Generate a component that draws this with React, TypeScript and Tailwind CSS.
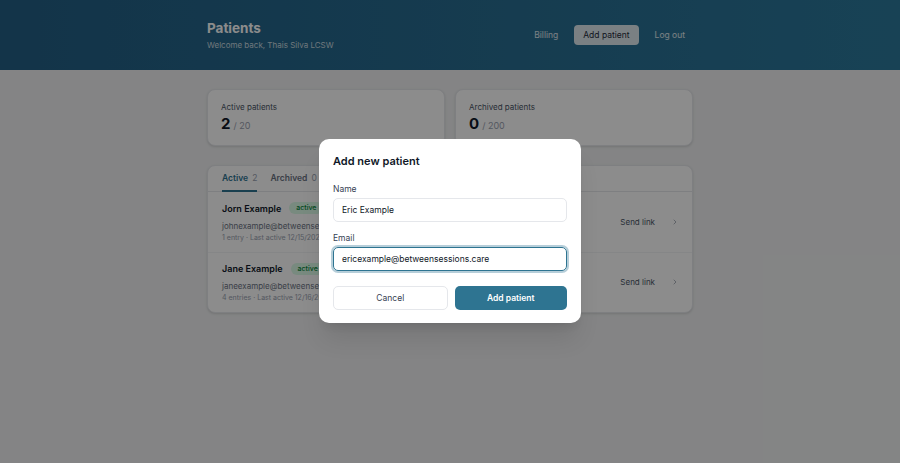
import React, { useState } from 'react';

interface Patient {
  name: string;
  email: string;
  meta: string;
}

const patients: Patient[] = [
  { name: 'Jorn Example', email: 'johnexample@betweensessions.care', meta: '1 entry · Last active 12/15/2025' },
  { name: 'Jane Example', email: 'janeexample@betweensessions.care', meta: '4 entries · Last active 12/16/2025' },
];

const font = { fontFamily: 'Inter, "Noto Sans", sans-serif' };

const StatCard: React.FC<{ label: string; value: number; limit: number }> = ({ label, value, limit }) => (
  <div className="flex-1 h-[57px] bg-white rounded-[8px] border border-gray-200 shadow-sm px-[13px] pt-[12px]">
    <div className="text-[8px] text-gray-600 leading-[10px]">{label}</div>
    <div className="mt-[3px] flex items-baseline gap-[3px]">
      <span className="text-[15px] font-bold text-gray-900 leading-[18px]">{value}</span>
      <span className="text-[9px] text-gray-400">/ {limit}</span>
    </div>
  </div>
);

const App: React.FC = () => {
  const [name, setName] = useState('Eric Example');
  const [email, setEmail] = useState('ericexample@betweensessions.care');

  return (
    <div className="relative min-h-[463px] bg-[#f0f1f2]" style={font}>
      {/* header */}
      <header className="h-[70px] bg-gradient-to-r from-[#235f85] to-[#2c799c]">
        <div className="w-[486px] mx-auto flex items-center justify-between h-full">
          <div>
            <h1 className="text-[13.5px] font-bold text-white leading-[18px]">Patients</h1>
            <p className="text-[8px] text-white/75 mt-[2px]">Welcome back, Thais Silva LCSW</p>
          </div>
          <nav className="flex items-center gap-[16px] text-[8.5px] text-white/85 pr-[8px]">
            <span>Billing</span>
            <span className="bg-white/85 text-gray-800 rounded-[4px] px-[9px] h-[20px] flex items-center">Add patient</span>
            <span>Log out</span>
          </nav>
        </div>
      </header>

      <main className="w-[486px] mx-auto pt-[19px]">
        <div className="flex gap-[10px]">
          <StatCard label="Active patients" value={2} limit={20} />
          <StatCard label="Archived patients" value={0} limit={200} />
        </div>

        <div className="mt-[19px] bg-white rounded-[8px] border border-gray-200 shadow-sm">
          <div className="flex gap-[13px] px-[14px] border-b border-gray-200 text-[8.5px] leading-[10px]">
            <div className="pt-[7px] pb-[7px] border-b-2 border-[#2e7491] -mb-px font-semibold text-[#2e7491]">
              Active <span className="font-normal text-gray-400 ml-[2px]">2</span>
            </div>
            <div className="pt-[7px] pb-[7px] font-semibold text-gray-500">
              Archived <span className="font-normal text-gray-400 ml-[2px]">0</span>
            </div>
          </div>
          {patients.map((p, i) => (
            <div key={p.email} className={`flex items-center justify-between px-[14px] h-[60px] ${i > 0 ? 'border-t border-gray-100' : ''}`}>
              <div>
                <div className="flex items-center gap-[8px] leading-[13px]">
                  <span className="text-[9px] font-semibold text-gray-900">{p.name}</span>
                  <span className="text-[7px] font-medium bg-green-100 text-green-700 rounded-full px-[7px] leading-[12px]">active</span>
                </div>
                <div className="text-[8px] text-gray-500 mt-[5px] leading-[12px]">{p.email}</div>
                <div className="text-[7px] text-gray-400 mt-[1px] leading-[10px]">{p.meta}</div>
              </div>
              <div className="flex items-center gap-[16px] text-[8px] text-gray-600 -mr-[1px] -mt-[1px]">
                <span>Send link</span>
                <svg width="8" height="8" viewBox="0 0 24 24" fill="none" stroke="#9ca3af" strokeWidth="2.5" strokeLinecap="round" strokeLinejoin="round">
                  <path d="m9 18 6-6-6-6" />
                </svg>
              </div>
            </div>
          ))}
        </div>
      </main>

      {/* modal */}
      <div className="absolute inset-0 bg-black/45 flex justify-center items-start pt-[139px]">
        <div className="w-[262px] bg-white rounded-[10px] shadow-xl px-[14px] pt-[15px] pb-[13px]">
          <h2 className="text-[11px] font-semibold text-gray-900 leading-[14px]">Add new patient</h2>
          <label className="block text-[8.5px] text-gray-700 leading-[12px] mt-[15px]">Name</label>
          <input
            value={name}
            onChange={e => setName(e.target.value)}
            className="block mt-[3px] w-full h-[24px] rounded-[5px] border border-gray-200 px-[8px] text-[8.5px] text-gray-900 outline-none"
          />
          <label className="block text-[8.5px] text-gray-700 leading-[12px] mt-[10px]">Email</label>
          <input
            value={email}
            onChange={e => setEmail(e.target.value)}
            className="block mt-[3px] w-full h-[24px] rounded-[5px] border border-[#2e7491] ring-2 ring-[#2e7491]/35 px-[8px] text-[8.5px] text-gray-900 outline-none"
          />
          <div className="flex gap-[7px] mt-[15px]">
            <button className="flex-1 h-[24px] rounded-[5px] border border-gray-200 bg-white text-[8.5px] text-gray-700">Cancel</button>
            <button className="flex-1 h-[24px] rounded-[5px] bg-[#2e7491] text-[8.5px] font-semibold text-white">Add patient</button>
          </div>
        </div>
      </div>
    </div>
  );
};

export default App;
